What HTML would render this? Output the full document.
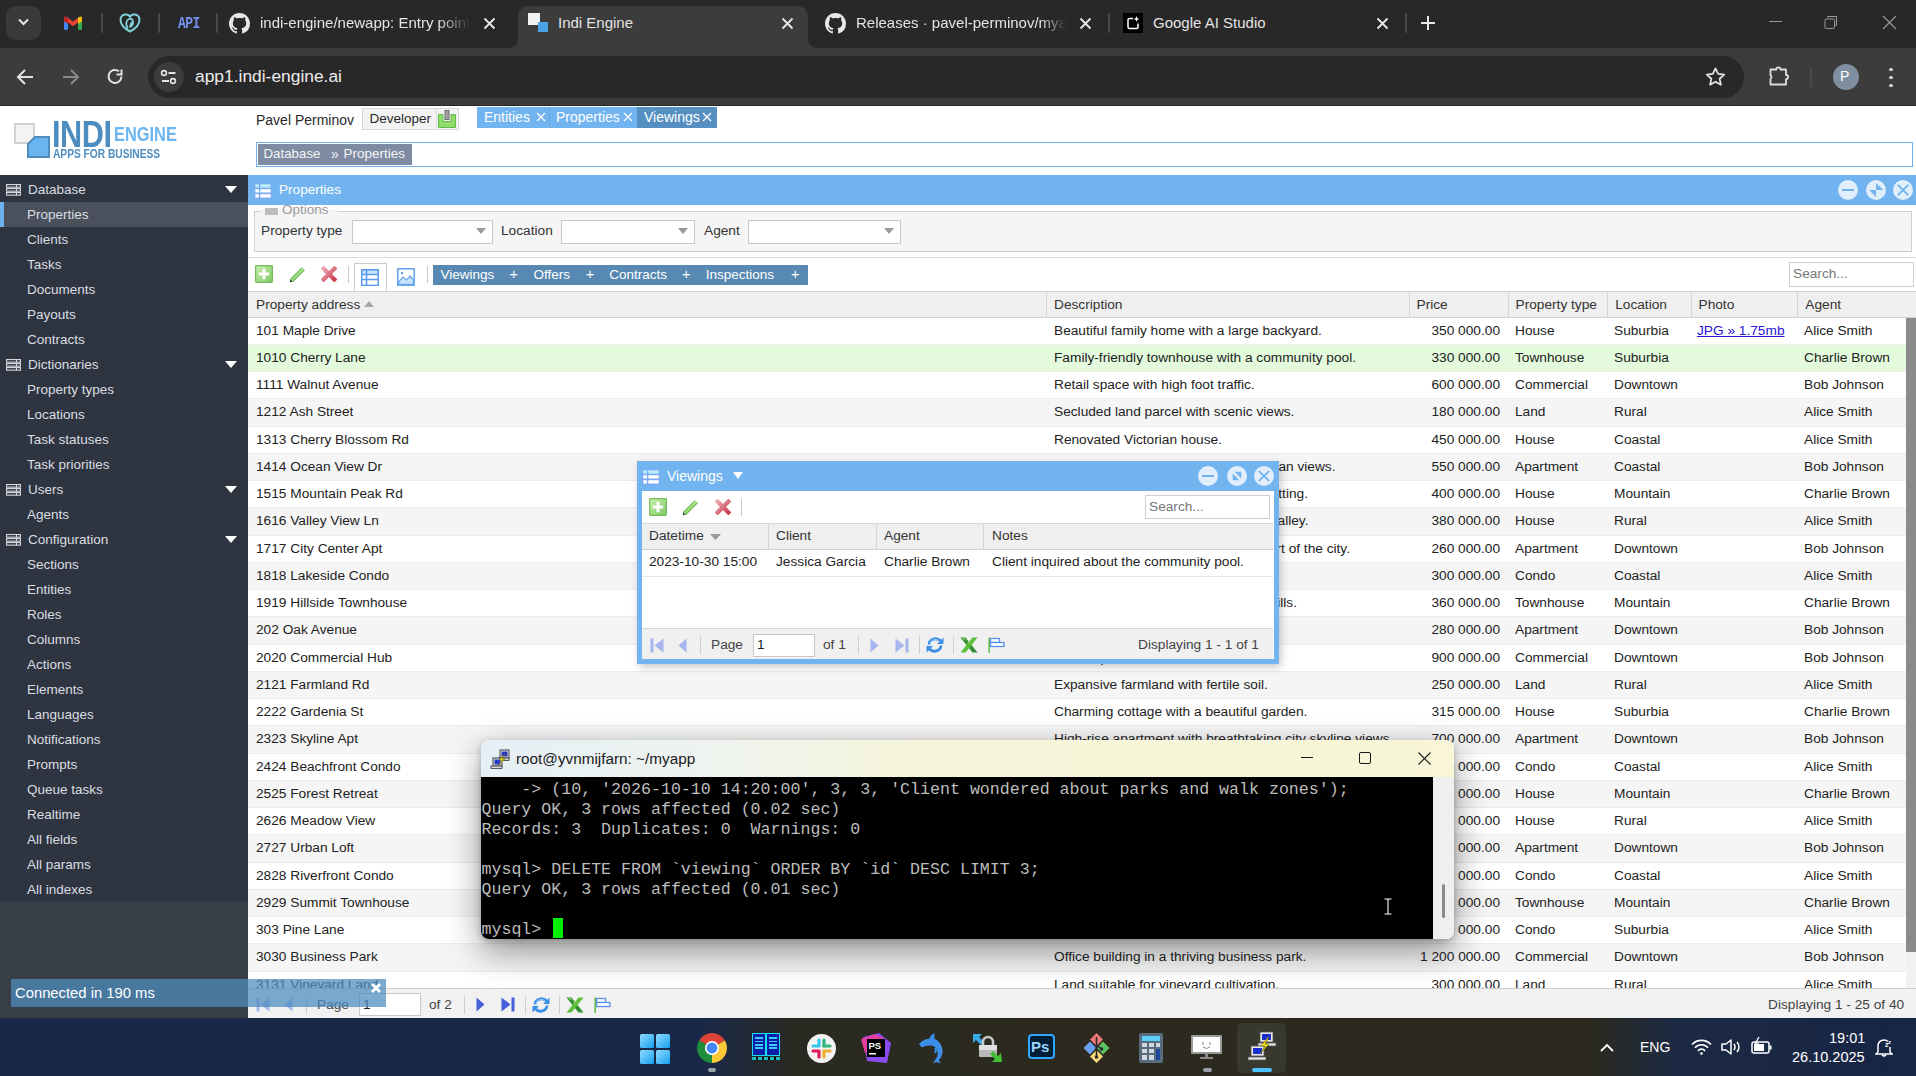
<!DOCTYPE html>
<html><head><meta charset="utf-8">
<style>
*{box-sizing:border-box;margin:0;padding:0}
html,body{width:1916px;height:1076px;overflow:hidden;background:#fff;font-family:"Liberation Sans",sans-serif}
.a{position:absolute}
.t{position:absolute;white-space:nowrap}
/* chrome */
#tabs{left:0;top:0;width:1916px;height:48px;background:#282828}
#tool{left:0;top:48px;width:1916px;height:58px;background:#3c3c3c}
#taskbar{left:0;top:1018px;width:1916px;height:58px;background:linear-gradient(90deg,#192849 0%,#192849 36.5%,#2a2a22 41.5%,#2c2a1e 55%,#2c2a1e 83%,#1c2a44 87.5%,#172546 100%)}
.ctab{color:#e3e3e3;font-size:15px}
.sep{position:absolute;width:2px;background:#4a4a4a;border-radius:1px}
/* app */
#side{left:0;top:175px;width:248px;height:843px;background:#2f3540}
.si{position:absolute;left:0;width:248px;height:25px;color:#d9dde2;font-size:13.5px;line-height:25px}
.si span{position:absolute;left:27px;top:0}
.sh span{left:28px}
.sel{background:#4a515c}
.g{font-size:13.7px;color:#222}
</style></head><body><svg width="0" height="0" style="position:absolute"><defs><linearGradient id="gAdd" x1="0" y1="0" x2="1" y2="1"><stop offset="0" stop-color="#c6f4ae"/><stop offset="1" stop-color="#80c462"/></linearGradient><linearGradient id="gPen" x1="0" y1="1" x2="1" y2="0"><stop offset="0" stop-color="#8fd672"/><stop offset="1" stop-color="#a6e48a"/></linearGradient><linearGradient id="gDel" x1="0" y1="0" x2="1" y2="1"><stop offset="0" stop-color="#e8a8b2"/><stop offset="1" stop-color="#cf3e4f"/></linearGradient></defs></svg>
<!-- ============ BROWSER CHROME ============ -->
<div id="tabs" class="a">
  <div class="a" style="left:6px;top:6px;width:35px;height:34px;border-radius:10px;background:#3a3a3a"></div>
  <svg class="a" style="left:17px;top:17px" width="13" height="10" viewBox="0 0 13 10"><path d="M2 2.5 L6.5 7 L11 2.5" stroke="#e8e8e8" stroke-width="2" fill="none"/></svg>
  <!-- gmail -->
  <svg class="a" style="left:64px;top:16px" width="18" height="14" viewBox="0 0 18 14"><path d="M2 2.5L9 8l7-5.5" fill="none" stroke="#ea4335" stroke-width="3.6" stroke-linejoin="miter"/><rect x="0" y="1" width="4" height="13" rx="1.2" fill="#4285f4"/><rect x="14" y="1" width="4" height="13" rx="1.2" fill="#34a853"/><path d="M14 2.2L16.2 0.6A1.6 1.6 0 0 1 18 2v3.2L14 8z" fill="#fbbc04"/><path d="M4 2.2L1.8 0.6A1.6 1.6 0 0 0 0 2v3.2L4 8z" fill="#c5221f"/></svg>
  <div class="sep" style="left:101px;top:13px;height:20px"></div>
  <svg class="a" style="left:119px;top:13px" width="22" height="20" viewBox="0 0 22 20"><path d="M11 18.5C5 15.5 1.5 11 1.5 6.5 1.5 3 4.5 1 7.5 1.5 9 1.8 10.2 2.6 11 3.6 11.8 2.6 13 1.8 14.5 1.5 17.5 1 20.5 3 20.5 6.5 20.5 11 17 15.5 11 18.5z" fill="none" stroke="#7fd0d8" stroke-width="2"/><path d="M8.5 15C6.5 11.5 7 7 10 6s4.5 1.5 4 4.5c-.3 1.8-1.5 3-2.8 3.5M12.5 9.5l-1.5 4" fill="none" stroke="#7fd0d8" stroke-width="1.8" stroke-linecap="round"/></svg>
  <div class="sep" style="left:158px;top:13px;height:20px"></div>
  <div class="t" style="left:178px;top:15px;color:#7592f2;font-family:'Liberation Mono';font-weight:bold;font-size:13px;letter-spacing:-0.6px;line-height:13px;transform:scaleY(1.25);transform-origin:0 0">API</div>
  <div class="sep" style="left:216px;top:13px;height:20px"></div>
  <!-- github tab -->
  <svg class="a" style="left:229px;top:13px" width="21" height="21" viewBox="0 0 16 16"><path fill="#e8e8e8" d="M8 0C3.58 0 0 3.58 0 8c0 3.54 2.29 6.53 5.47 7.59.4.07.55-.17.55-.38 0-.19-.01-.82-.01-1.49-2.01.37-2.53-.49-2.69-.94-.09-.23-.48-.94-.82-1.13-.28-.15-.68-.52-.01-.53.63-.01 1.08.58 1.23.82.72 1.21 1.87.87 2.33.66.07-.52.28-.87.51-1.07-1.78-.2-3.64-.89-3.64-3.95 0-.87.31-1.59.82-2.15-.08-.2-.36-1.02.08-2.12 0 0 .67-.21 2.2.82.64-.18 1.32-.27 2-.27.68 0 1.36.09 2 .27 1.53-1.04 2.2-.82 2.2-.82.44 1.1.16 1.92.08 2.12.51.56.82 1.27.82 2.15 0 3.07-1.87 3.75-3.65 3.95.29.25.54.73.54 1.48 0 1.07-.01 1.93-.01 2.2 0 .21.15.46.55.38A8.013 8.013 0 0016 8c0-4.42-3.58-8-8-8z"/></svg>
  <div class="t ctab" style="left:260px;top:14px;width:210px;overflow:hidden;-webkit-mask-image:linear-gradient(90deg,#000 85%,transparent)">indi-engine/newapp: Entry point</div>
  <svg class="a" style="left:483px;top:17px" width="13" height="13" viewBox="0 0 13 13"><path d="M1.5 1.5l10 10M11.5 1.5l-10 10" stroke="#e8e8e8" stroke-width="1.8"/></svg>
  <!-- active tab -->
  <div class="a" style="left:518px;top:6px;width:290px;height:42px;background:#3c3c3c;border-radius:10px 10px 0 0"></div>
  <div class="a" style="left:508px;top:38px;width:10px;height:10px;background:radial-gradient(circle at 0 0,#282828 10px,#3c3c3c 10.5px)"></div>
  <div class="a" style="left:808px;top:38px;width:10px;height:10px;background:radial-gradient(circle at 100% 0,#282828 10px,#3c3c3c 10.5px)"></div>
  <div class="a" style="left:528px;top:13px;width:12px;height:12px;background:#f2f2f2"></div>
  <div class="a" style="left:538px;top:22px;width:10px;height:10px;background:#4aa3e6"></div>
  <div class="t ctab" style="left:558px;top:14px">Indi Engine</div>
  <svg class="a" style="left:781px;top:17px" width="13" height="13" viewBox="0 0 13 13"><path d="M1.5 1.5l10 10M11.5 1.5l-10 10" stroke="#e8e8e8" stroke-width="1.8"/></svg>
  <!-- releases tab -->
  <svg class="a" style="left:825px;top:13px" width="21" height="21" viewBox="0 0 16 16"><path fill="#e8e8e8" d="M8 0C3.58 0 0 3.58 0 8c0 3.54 2.29 6.53 5.47 7.59.4.07.55-.17.55-.38 0-.19-.01-.82-.01-1.49-2.01.37-2.53-.49-2.69-.94-.09-.23-.48-.94-.82-1.13-.28-.15-.68-.52-.01-.53.63-.01 1.08.58 1.23.82.72 1.21 1.87.87 2.33.66.07-.52.28-.87.51-1.07-1.78-.2-3.64-.89-3.64-3.95 0-.87.31-1.59.82-2.15-.08-.2-.36-1.02.08-2.12 0 0 .67-.21 2.2.82.64-.18 1.32-.27 2-.27.68 0 1.36.09 2 .27 1.53-1.04 2.2-.82 2.2-.82.44 1.1.16 1.92.08 2.12.51.56.82 1.27.82 2.15 0 3.07-1.87 3.75-3.65 3.95.29.25.54.73.54 1.48 0 1.07-.01 1.93-.01 2.2 0 .21.15.46.55.38A8.013 8.013 0 0016 8c0-4.42-3.58-8-8-8z"/></svg>
  <div class="t ctab" style="left:856px;top:14px;width:210px;overflow:hidden;-webkit-mask-image:linear-gradient(90deg,#000 88%,transparent)">Releases · pavel-perminov/myapp</div>
  <svg class="a" style="left:1079px;top:17px" width="13" height="13" viewBox="0 0 13 13"><path d="M1.5 1.5l10 10M11.5 1.5l-10 10" stroke="#e8e8e8" stroke-width="1.8"/></svg>
  <div class="sep" style="left:1108px;top:13px;height:20px"></div>
  <!-- ai studio -->
  <div class="a" style="left:1123px;top:13px;width:20px;height:20px;background:#000"></div>
  <svg class="a" style="left:1125px;top:15px" width="16" height="16" viewBox="0 0 16 16"><path d="M8 3.5H4.5a1.5 1.5 0 0 0-1.5 1.5v7a1.5 1.5 0 0 0 1.5 1.5h7a1.5 1.5 0 0 0 1.5-1.5V8.5" fill="none" stroke="#fff" stroke-width="1.5"/><path d="M11.5 1l.8 2.2 2.2.8-2.2.8-.8 2.2-.8-2.2-2.2-.8 2.2-.8z" fill="#fff"/></svg>
  <div class="t ctab" style="left:1153px;top:14px">Google AI Studio</div>
  <svg class="a" style="left:1376px;top:17px" width="13" height="13" viewBox="0 0 13 13"><path d="M1.5 1.5l10 10M11.5 1.5l-10 10" stroke="#e8e8e8" stroke-width="1.8"/></svg>
  <div class="sep" style="left:1405px;top:13px;height:20px"></div>
  <svg class="a" style="left:1420px;top:15px" width="16" height="16" viewBox="0 0 16 16"><path d="M8 1v14M1 8h14" stroke="#e8e8e8" stroke-width="2"/></svg>
  <!-- window controls -->
  <div class="a" style="left:1769px;top:21px;width:13px;height:1px;background:#9a9a9a"></div>
  <svg class="a" style="left:1824px;top:15px" width="14" height="14" viewBox="0 0 14 14"><rect x="1" y="4" width="9.5" height="9.5" rx="1.2" fill="none" stroke="#9a9a9a" stroke-width="1"/><path d="M3.5 2.5V1.5h9v9h-1" fill="none" stroke="#9a9a9a" stroke-width="1"/></svg>
  <svg class="a" style="left:1882px;top:15px" width="15" height="15" viewBox="0 0 15 15"><path d="M1 1l13 13M14 1L1 14" stroke="#9a9a9a" stroke-width="1.1"/></svg>
</div>
<div id="tool" class="a"><div class="a" style="left:0;top:57px;width:1916px;height:1px;background:#262626"></div>
  <svg class="a" style="left:16px;top:20px" width="19" height="18" viewBox="0 0 19 18"><path d="M9 2L2 9l7 7M2 9h15" fill="none" stroke="#e3e3e3" stroke-width="2"/></svg>
  <svg class="a" style="left:61px;top:20px" width="19" height="18" viewBox="0 0 19 18"><path d="M10 2l7 7-7 7M17 9H2" fill="none" stroke="#8a8a8a" stroke-width="2"/></svg>
  <svg class="a" style="left:106px;top:20px" width="19" height="18" viewBox="0 0 19 18"><path d="M15.5 8.5A6.5 6.5 0 1 1 13 3.3" fill="none" stroke="#e3e3e3" stroke-width="2"/><path d="M15.5 1.5v5h-5" fill="none" stroke="#e3e3e3" stroke-width="2"/></svg>
  <div class="a" style="left:148px;top:8px;width:1596px;height:42px;border-radius:21px;background:#282828"></div>
  <div class="a" style="left:154px;top:14px;width:30px;height:30px;border-radius:15px;background:#3c3c3c"></div>
  <svg class="a" style="left:160px;top:21px" width="18" height="16" viewBox="0 0 18 16"><circle cx="4" cy="4" r="2.4" fill="none" stroke="#e3e3e3" stroke-width="1.6"/><path d="M8.5 4h7M2 12h7" stroke="#e3e3e3" stroke-width="1.8"/><circle cx="13" cy="12" r="2.4" fill="none" stroke="#e3e3e3" stroke-width="1.6"/></svg>
  <div class="t" style="left:195px;top:18px;color:#ececec;font-size:17.4px">app1.indi-engine.ai</div>
  <svg class="a" style="left:1704px;top:18px" width="23" height="22" viewBox="0 0 24 24"><path d="M12 2.5l2.9 6.2 6.6.7-5 4.5 1.4 6.6L12 17.1l-5.9 3.4 1.4-6.6-5-4.5 6.6-.7z" fill="none" stroke="#e3e3e3" stroke-width="1.9" stroke-linejoin="round"/></svg>
  <svg class="a" style="left:1767px;top:16px" width="24" height="24" viewBox="0 0 24 24"><path d="M3.5 5.5H9.3A2.1 2.1 0 0 1 13.5 5.5H19V11A2.1 2.1 0 0 1 19 15.2V20.5H3.5V15A2.3 2.3 0 0 0 3.5 11.2Z" fill="none" stroke="#dedede" stroke-width="1.8" stroke-linejoin="round"/></svg>
  <div class="sep" style="left:1810px;top:19px;height:20px"></div>
  <div class="a" style="left:1833px;top:16px;width:26px;height:26px;border-radius:13px;background:#7f8f9f"></div>
  <div class="t" style="left:1840px;top:20px;color:#fff;font-size:14px">P</div>
  <div class="a" style="left:1889px;top:19.5px;width:3.5px;height:3.5px;border-radius:2px;background:#d0d0d0"></div>
  <div class="a" style="left:1889px;top:27.5px;width:3.5px;height:3.5px;border-radius:2px;background:#d0d0d0"></div>
  <div class="a" style="left:1889px;top:35.5px;width:3.5px;height:3.5px;border-radius:2px;background:#d0d0d0"></div>
</div>

<!-- APP -->
<!--APP_START-->
<div class="a" style="left:0;top:106px;width:1916px;height:69px;background:#fff">
  <!-- logo -->
  <div class="a" style="left:14px;top:17px;width:21px;height:21px;border:2px solid #d2d2d2;background:#f3f3f3"></div>
  <svg class="a" style="left:27px;top:30px" width="23" height="22" viewBox="0 0 23 22"><path d="M1 21V8L8 1h14v20z" fill="#6ab4f0" stroke="#4c8cbf" stroke-width="2"/></svg>
  <div class="t" style="left:52px;top:11px;color:#4d8cbf;font-weight:bold;font-size:36.5px;letter-spacing:-0.5px;transform:scaleX(0.84);transform-origin:0 0;line-height:36.5px">INDI</div>
  <div class="t" style="left:114px;top:17px;color:#6cb5ef;font-weight:bold;font-size:21px;transform:scaleX(0.78);transform-origin:0 0;line-height:21px">ENGINE</div>
  <div class="t" style="left:53px;top:42px;color:#4d8cbf;font-weight:bold;font-size:12px;transform:scaleX(0.85);transform-origin:0 0;line-height:12px">APPS FOR BUSINESS</div>
  <div class="t" style="left:256px;top:6px;color:#2a2a2a;font-size:14px">Pavel Perminov</div>
  <div class="a" style="left:362px;top:2px;width:97px;height:22px;background:#f3f3f3;border:1px solid #d8d8d8"></div>
  <div class="a" style="left:436px;top:3px;width:1px;height:20px;background:#dcdcdc"></div>
  <div class="t" style="left:369.5px;top:5px;color:#2a2a2a;font-size:13.5px">Developer</div>
  <svg class="a" style="left:438px;top:4px" width="18" height="18" viewBox="0 0 18 18"><path d="M0.5 4.5h4.5v7h8v-7h4.5v13h-17z" fill="#8fdc6a" stroke="#62b848" stroke-width="1"/><rect x="7" y="0.5" width="4" height="9" fill="#a0a0a0" stroke="#707070" stroke-width="1"/></svg>
  <div class="a" style="left:477px;top:1px;width:72px;height:21px;background:#72b4ef"></div>
  <div class="a" style="left:549px;top:1px;width:88px;height:21px;background:#72b4ef;border-left:1px solid #68a6dd"></div>
  <div class="a" style="left:637px;top:1px;width:80px;height:21px;background:#5690c2"></div>
  <div class="t" style="left:484px;top:3px;color:#fff;font-size:14px">Entities</div>
  <svg class="a" style="left:535.5px;top:5.5px" width="10" height="10" viewBox="0 0 10 10"><path d="M1 1l8 8M9 1L1 9" stroke="#fff" stroke-width="1.3"/></svg>
  <div class="t" style="left:556px;top:3px;color:#fff;font-size:14px">Properties</div>
  <svg class="a" style="left:622.5px;top:5.5px" width="10" height="10" viewBox="0 0 10 10"><path d="M1 1l8 8M9 1L1 9" stroke="#fff" stroke-width="1.3"/></svg>
  <div class="t" style="left:644px;top:3px;color:#fff;font-size:14px">Viewings</div>
  <svg class="a" style="left:702px;top:5.5px" width="10" height="10" viewBox="0 0 10 10"><path d="M1 1l8 8M9 1L1 9" stroke="#fff" stroke-width="1.3"/></svg>
  <div class="a" style="left:256px;top:36px;width:1657px;height:25px;border:1px solid #70b0ee;background:#fff"></div>
  <div class="a" style="left:258px;top:38px;width:154px;height:21px;background:#7f8ba3"></div>
  <div class="t" style="left:263.5px;top:40px;color:#f4f4f4;font-size:13.3px">Database</div><div class="t" style="left:331px;top:39.5px;color:#f4f4f4;font-size:14px">»</div><div class="t" style="left:343.5px;top:40px;color:#f4f4f4;font-size:13.5px">Properties</div>
</div>
<div id="side" class="a"><div class="a" style="left:0;top:727px;width:248px;height:116px;background:#373e48"></div>
<div class="si sh" style="top:1.5px"><svg class="a" style="left:6px;top:7.3px" width="15" height="12" viewBox="0 0 15 12"><g fill="none" stroke="#d5d9de" stroke-width="1.1"><rect x="0.55" y="0.55" width="13.9" height="2.6"/><rect x="0.55" y="4.55" width="13.9" height="2.6"/><rect x="0.55" y="8.55" width="13.9" height="2.6"/></g><g stroke="#d5d9de" stroke-width="1"><path d="M10.5 .5v3M10.5 4.5v3M10.5 8.5v3"/></g></svg><span>Database</span><svg class="a" style="left:224.5px;top:9.5px" width="12" height="7" viewBox="0 0 12 7"><path d="M0 0h12L6 7z" fill="#fff"/></svg></div>
<div class="si sel" style="top:26.5px"><div class="a" style="left:0;top:0;width:4px;height:25px;background:#6cb2ee"></div><span>Properties</span></div>
<div class="si" style="top:51.5px"><span>Clients</span></div>
<div class="si" style="top:76.5px"><span>Tasks</span></div>
<div class="si" style="top:101.5px"><span>Documents</span></div>
<div class="si" style="top:126.5px"><span>Payouts</span></div>
<div class="si" style="top:151.5px"><span>Contracts</span></div>
<div class="si sh" style="top:176.5px"><svg class="a" style="left:6px;top:7.3px" width="15" height="12" viewBox="0 0 15 12"><g fill="none" stroke="#d5d9de" stroke-width="1.1"><rect x="0.55" y="0.55" width="13.9" height="2.6"/><rect x="0.55" y="4.55" width="13.9" height="2.6"/><rect x="0.55" y="8.55" width="13.9" height="2.6"/></g><g stroke="#d5d9de" stroke-width="1"><path d="M10.5 .5v3M10.5 4.5v3M10.5 8.5v3"/></g></svg><span>Dictionaries</span><svg class="a" style="left:224.5px;top:9.5px" width="12" height="7" viewBox="0 0 12 7"><path d="M0 0h12L6 7z" fill="#fff"/></svg></div>
<div class="si" style="top:201.5px"><span>Property types</span></div>
<div class="si" style="top:226.5px"><span>Locations</span></div>
<div class="si" style="top:251.5px"><span>Task statuses</span></div>
<div class="si" style="top:276.5px"><span>Task priorities</span></div>
<div class="si sh" style="top:301.5px"><svg class="a" style="left:6px;top:7.3px" width="15" height="12" viewBox="0 0 15 12"><g fill="none" stroke="#d5d9de" stroke-width="1.1"><rect x="0.55" y="0.55" width="13.9" height="2.6"/><rect x="0.55" y="4.55" width="13.9" height="2.6"/><rect x="0.55" y="8.55" width="13.9" height="2.6"/></g><g stroke="#d5d9de" stroke-width="1"><path d="M10.5 .5v3M10.5 4.5v3M10.5 8.5v3"/></g></svg><span>Users</span><svg class="a" style="left:224.5px;top:9.5px" width="12" height="7" viewBox="0 0 12 7"><path d="M0 0h12L6 7z" fill="#fff"/></svg></div>
<div class="si" style="top:326.5px"><span>Agents</span></div>
<div class="si sh" style="top:351.5px"><svg class="a" style="left:6px;top:7.3px" width="15" height="12" viewBox="0 0 15 12"><g fill="none" stroke="#d5d9de" stroke-width="1.1"><rect x="0.55" y="0.55" width="13.9" height="2.6"/><rect x="0.55" y="4.55" width="13.9" height="2.6"/><rect x="0.55" y="8.55" width="13.9" height="2.6"/></g><g stroke="#d5d9de" stroke-width="1"><path d="M10.5 .5v3M10.5 4.5v3M10.5 8.5v3"/></g></svg><span>Configuration</span><svg class="a" style="left:224.5px;top:9.5px" width="12" height="7" viewBox="0 0 12 7"><path d="M0 0h12L6 7z" fill="#fff"/></svg></div>
<div class="si" style="top:376.5px"><span>Sections</span></div>
<div class="si" style="top:401.5px"><span>Entities</span></div>
<div class="si" style="top:426.5px"><span>Roles</span></div>
<div class="si" style="top:451.5px"><span>Columns</span></div>
<div class="si" style="top:476.5px"><span>Actions</span></div>
<div class="si" style="top:501.5px"><span>Elements</span></div>
<div class="si" style="top:526.5px"><span>Languages</span></div>
<div class="si" style="top:551.5px"><span>Notifications</span></div>
<div class="si" style="top:576.5px"><span>Prompts</span></div>
<div class="si" style="top:601.5px"><span>Queue tasks</span></div>
<div class="si" style="top:626.5px"><span>Realtime</span></div>
<div class="si" style="top:651.5px"><span>All fields</span></div>
<div class="si" style="top:676.5px"><span>All params</span></div>
<div class="si" style="top:701.5px"><span>All indexes</span></div>
</div>

<div class="a" style="left:248px;top:175px;width:1668px;height:843px;background:#fff;overflow:hidden">
  <div class="a" style="left:0;top:0;width:1668px;height:30px;background:#72b4ef"></div>
  <svg class="a" style="left:6px;top:7.5px" width="18" height="16" viewBox="0 0 18 16"><rect x="0" y="0" width="18" height="16" rx="1.5" fill="#7aaaf6"/><g fill="#fff"><rect x="1.3" y="6.2" width="3.6" height="3.3"/><rect x="6.3" y="6.2" width="10.4" height="3.3"/><rect x="1.3" y="11.2" width="3.6" height="3.4"/><rect x="6.3" y="11.2" width="10.4" height="3.4"/></g><g fill="#bdeefc"><rect x="1.3" y="1.3" width="3.6" height="3.3"/><rect x="6.3" y="1.3" width="10.4" height="3.3"/></g></svg>
  <div class="t" style="left:31px;top:7px;color:#fff;font-size:13.6px">Properties</div>
  <!-- title tools -->
  <svg class="a" style="left:1590px;top:5px" width="20" height="20" viewBox="0 0 20 20"><circle cx="10" cy="10" r="10" fill="#e1eefb"/><rect x="4" y="9" width="12" height="2" fill="#72b4ef"/></svg>
  <svg class="a" style="left:1618px;top:5px" width="20" height="20" viewBox="0 0 20 20"><circle cx="10" cy="10" r="10" fill="#e1eefb"/><path d="M10 2.8V10H17.2zM3.3 10H10V17z" fill="#72b4ef"/></svg>
  <svg class="a" style="left:1645px;top:5px" width="20" height="20" viewBox="0 0 20 20"><circle cx="10" cy="10" r="10" fill="#e1eefb"/><path d="M4.8 4.8l10.4 10.4M15.2 4.8L4.8 15.2" stroke="#72b4ef" stroke-width="1.8"/></svg>
  <!-- options fieldset -->
  <div class="a" style="left:6px;top:36px;width:1658px;height:41px;border:1px solid #cfcfcf;background:#f5f5f5"></div>
  <div class="a" style="left:13px;top:30px;width:76px;height:10px;background:#fff"></div>
  <div class="a" style="left:13px;top:34px;width:76px;height:6px;background:#f5f5f5"></div>
  <div class="a" style="left:17px;top:33px;width:13px;height:7px;background:#bdbdbd"></div>
  <div class="t" style="left:34px;top:27px;color:#999;font-size:13.5px">Options</div>
  <div class="t g" style="left:13px;top:48px;color:#333">Property type</div>
  <div class="a" style="left:104px;top:45px;width:141px;height:24px;border:1px solid #c8c8c8;background:#fff"></div>
  <svg class="a" style="left:228px;top:53px" width="10" height="6" viewBox="0 0 10 6"><path d="M0 0h10L5 6z" fill="#999"/></svg>
  <div class="t g" style="left:253px;top:48px;color:#333">Location</div>
  <div class="a" style="left:313px;top:45px;width:134px;height:24px;border:1px solid #c8c8c8;background:#fff"></div>
  <svg class="a" style="left:430px;top:53px" width="10" height="6" viewBox="0 0 10 6"><path d="M0 0h10L5 6z" fill="#999"/></svg>
  <div class="t g" style="left:456px;top:48px;color:#333">Agent</div>
  <div class="a" style="left:500px;top:45px;width:153px;height:24px;border:1px solid #c8c8c8;background:#fff"></div>
  <svg class="a" style="left:636px;top:53px" width="10" height="6" viewBox="0 0 10 6"><path d="M0 0h10L5 6z" fill="#999"/></svg>
  <div class="a" style="left:0;top:82px;width:1668px;height:1px;background:#d8d8d8"></div>
  <!-- toolbar -->
  <svg class="a" style="left:7px;top:90px" width="18" height="18" viewBox="0 0 18 18"><rect x="0.6" y="0.6" width="16.8" height="16.8" rx="0.8" fill="url(#gAdd)" stroke="#78bb5e" stroke-width="1.2"/><path d="M9 3.8v10.4M3.8 9h10.4" stroke="#fff" stroke-width="3.1"/></svg>
  <svg class="a" style="left:40.5px;top:91px" width="17" height="17" viewBox="0 0 17 17"><path d="M2.3 14.7L14.3 2.7" stroke="#6cae50" stroke-width="4.4"/><path d="M2.3 14.7L14.3 2.7" stroke="url(#gPen)" stroke-width="2.6"/><path d="M0.8 16.2l2.6-.6-2-2z" fill="#222"/></svg>
  <svg class="a" style="left:73px;top:91px" width="16" height="16" viewBox="0 0 16 16"><path d="M2.6 2.6l10.8 10.8M13.4 2.6L2.6 13.4" stroke="url(#gDel)" stroke-width="4.3" stroke-linecap="square"/></svg>
  <div class="a" style="left:100px;top:91px;width:1px;height:17px;background:#c8c8c8"></div>
  <div class="a" style="left:106px;top:88px;width:33px;height:29px;border:1px solid #cbcbcb;border-bottom:none;background:#fff"></div>
  <svg class="a" style="left:113px;top:94px" width="18" height="17" viewBox="0 0 18 17"><rect x="0.8" y="0.8" width="16.4" height="15.4" fill="#c8e4fb" stroke="#5d9bf0" stroke-width="1.6"/><rect x="1.6" y="5.5" width="14.8" height="10" fill="#fff"/><path d="M1 5.5h16M1 10.5h16M5.5 1v15" stroke="#5d9bf0" stroke-width="1.6"/></svg>
  <svg class="a" style="left:149px;top:93px" width="18" height="18" viewBox="0 0 18 18"><rect x="0.8" y="0.8" width="16.4" height="16.4" fill="#fff" stroke="#6aa5f0" stroke-width="1.6"/><path d="M1.6 14l4.5-5 3.5 3 3.5-4 3.3 4v4.4H1.6z" fill="#c8e4fb" stroke="#6aa5f0" stroke-width="1.2"/><circle cx="5" cy="5" r="1.2" fill="#5d9bf0"/></svg>
  <div class="a" style="left:179px;top:91px;width:1px;height:17px;background:#c8c8c8"></div>
  <div class="a" style="left:185px;top:90px;width:375px;height:20px;background:#5889b3"></div>
  <div class="t" style="left:192.5px;top:92.3px;color:#fff;font-size:13.5px">Viewings</div>
  <div class="t" style="left:261.5px;top:91px;color:#fff;font-size:14.5px">+</div>
  <div class="t" style="left:285.5px;top:92.3px;color:#fff;font-size:13.5px">Offers</div>
  <div class="t" style="left:337.8px;top:91px;color:#fff;font-size:14.5px">+</div>
  <div class="t" style="left:361.3px;top:92.3px;color:#fff;font-size:13.5px">Contracts</div>
  <div class="t" style="left:434px;top:91px;color:#fff;font-size:14.5px">+</div>
  <div class="t" style="left:457.8px;top:92.3px;color:#fff;font-size:13.5px">Inspections</div>
  <div class="t" style="left:543px;top:91px;color:#fff;font-size:14.5px">+</div>
  <div class="a" style="left:1541px;top:87px;width:125px;height:25px;border:1px solid #cfcfcf;background:#fff"></div>
  <div class="t" style="left:1545px;top:91px;color:#777;font-size:13.7px">Search...</div>
  <!-- grid header -->
  <div class="a" style="left:0;top:116px;width:1668px;height:27px;background:#efefef;border-top:1px solid #cfcfcf;border-bottom:1px solid #d0d0d0"></div>

<div class="t g" style="left:8px;top:121.7px;color:#333">Property address</div>
<div class="a" style="left:798px;top:117px;width:1px;height:25px;background:#d6d6d6"></div>
<div class="t g" style="left:806px;top:121.7px;color:#333">Description</div>
<div class="a" style="left:1160.5px;top:117px;width:1px;height:25px;background:#d6d6d6"></div>
<div class="t g" style="left:1168.5px;top:121.7px;color:#333">Price</div>
<div class="a" style="left:1259.5px;top:117px;width:1px;height:25px;background:#d6d6d6"></div>
<div class="t g" style="left:1267.5px;top:121.7px;color:#333">Property type</div>
<div class="a" style="left:1359.2px;top:117px;width:1px;height:25px;background:#d6d6d6"></div>
<div class="t g" style="left:1367.2px;top:121.7px;color:#333">Location</div>
<div class="a" style="left:1442.5px;top:117px;width:1px;height:25px;background:#d6d6d6"></div>
<div class="t g" style="left:1450.5px;top:121.7px;color:#333">Photo</div>
<div class="a" style="left:1549.3px;top:117px;width:1px;height:25px;background:#d6d6d6"></div>
<div class="t g" style="left:1557.3px;top:121.7px;color:#333">Agent</div>
<svg class="a" style="left:116px;top:126px" width="10" height="6" viewBox="0 0 10 6"><path d="M0 6h10L5 0z" fill="#a8a8a8"/></svg>
<div class="a" style="left:0;top:143px;width:1658px;height:700px;overflow:hidden">
<div class="a" style="left:0;top:-0.30px;width:1658px;height:27.25px;background:#fff;border-bottom:1px solid #ececec">
<div class="t g" style="left:8px;top:5px">101 Maple Drive</div>
<div class="t g" style="left:806px;top:5px">Beautiful family home with a large backyard.</div>
<div class="t g" style="left:1160px;width:92px;text-align:right;top:5px">350 000.00</div>
<div class="t g" style="left:1267px;top:5px">House</div>
<div class="t g" style="left:1366px;top:5px">Suburbia</div>
<div class="t g" style="left:1449px;top:5px;color:#2a14d8;text-decoration:underline">JPG » 1.75mb</div>
<div class="t g" style="left:1556px;top:5px">Alice Smith</div>
</div>
<div class="a" style="left:0;top:26.95px;width:1658px;height:27.25px;background:#e3fbdc;border-bottom:1px solid #ececec">
<div class="t g" style="left:8px;top:5px">1010 Cherry Lane</div>
<div class="t g" style="left:806px;top:5px">Family-friendly townhouse with a community pool.</div>
<div class="t g" style="left:1160px;width:92px;text-align:right;top:5px">330 000.00</div>
<div class="t g" style="left:1267px;top:5px">Townhouse</div>
<div class="t g" style="left:1366px;top:5px">Suburbia</div>
<div class="t g" style="left:1556px;top:5px">Charlie Brown</div>
</div>
<div class="a" style="left:0;top:54.20px;width:1658px;height:27.25px;background:#fff;border-bottom:1px solid #ececec">
<div class="t g" style="left:8px;top:5px">1111 Walnut Avenue</div>
<div class="t g" style="left:806px;top:5px">Retail space with high foot traffic.</div>
<div class="t g" style="left:1160px;width:92px;text-align:right;top:5px">600 000.00</div>
<div class="t g" style="left:1267px;top:5px">Commercial</div>
<div class="t g" style="left:1366px;top:5px">Downtown</div>
<div class="t g" style="left:1556px;top:5px">Bob Johnson</div>
</div>
<div class="a" style="left:0;top:81.45px;width:1658px;height:27.25px;background:#f5f5f5;border-bottom:1px solid #ececec">
<div class="t g" style="left:8px;top:5px">1212 Ash Street</div>
<div class="t g" style="left:806px;top:5px">Secluded land parcel with scenic views.</div>
<div class="t g" style="left:1160px;width:92px;text-align:right;top:5px">180 000.00</div>
<div class="t g" style="left:1267px;top:5px">Land</div>
<div class="t g" style="left:1366px;top:5px">Rural</div>
<div class="t g" style="left:1556px;top:5px">Alice Smith</div>
</div>
<div class="a" style="left:0;top:108.70px;width:1658px;height:27.25px;background:#fff;border-bottom:1px solid #ececec">
<div class="t g" style="left:8px;top:5px">1313 Cherry Blossom Rd</div>
<div class="t g" style="left:806px;top:5px">Renovated Victorian house.</div>
<div class="t g" style="left:1160px;width:92px;text-align:right;top:5px">450 000.00</div>
<div class="t g" style="left:1267px;top:5px">House</div>
<div class="t g" style="left:1366px;top:5px">Coastal</div>
<div class="t g" style="left:1556px;top:5px">Alice Smith</div>
</div>
<div class="a" style="left:0;top:135.95px;width:1658px;height:27.25px;background:#f5f5f5;border-bottom:1px solid #ececec">
<div class="t g" style="left:8px;top:5px">1414 Ocean View Dr</div>
<div class="t g" style="right:570.5px;top:5px">Modern apartment with stunning ocean views.</div>
<div class="t g" style="left:1160px;width:92px;text-align:right;top:5px">550 000.00</div>
<div class="t g" style="left:1267px;top:5px">Apartment</div>
<div class="t g" style="left:1366px;top:5px">Coastal</div>
<div class="t g" style="left:1556px;top:5px">Bob Johnson</div>
</div>
<div class="a" style="left:0;top:163.20px;width:1658px;height:27.25px;background:#fff;border-bottom:1px solid #ececec">
<div class="t g" style="left:8px;top:5px">1515 Mountain Peak Rd</div>
<div class="t g" style="right:598px;top:5px">Cozy cabin in a serene mountain setting.</div>
<div class="t g" style="left:1160px;width:92px;text-align:right;top:5px">400 000.00</div>
<div class="t g" style="left:1267px;top:5px">House</div>
<div class="t g" style="left:1366px;top:5px">Mountain</div>
<div class="t g" style="left:1556px;top:5px">Charlie Brown</div>
</div>
<div class="a" style="left:0;top:190.45px;width:1658px;height:27.25px;background:#f5f5f5;border-bottom:1px solid #ececec">
<div class="t g" style="left:8px;top:5px">1616 Valley View Ln</div>
<div class="t g" style="right:597.5px;top:5px">Spacious home overlooking the valley.</div>
<div class="t g" style="left:1160px;width:92px;text-align:right;top:5px">380 000.00</div>
<div class="t g" style="left:1267px;top:5px">House</div>
<div class="t g" style="left:1366px;top:5px">Rural</div>
<div class="t g" style="left:1556px;top:5px">Alice Smith</div>
</div>
<div class="a" style="left:0;top:217.70px;width:1658px;height:27.25px;background:#fff;border-bottom:1px solid #ececec">
<div class="t g" style="left:8px;top:5px">1717 City Center Apt</div>
<div class="t g" style="right:556px;top:5px">Studio apartment in the heart of the city.</div>
<div class="t g" style="left:1160px;width:92px;text-align:right;top:5px">260 000.00</div>
<div class="t g" style="left:1267px;top:5px">Apartment</div>
<div class="t g" style="left:1366px;top:5px">Downtown</div>
<div class="t g" style="left:1556px;top:5px">Bob Johnson</div>
</div>
<div class="a" style="left:0;top:244.95px;width:1658px;height:27.25px;background:#f5f5f5;border-bottom:1px solid #ececec">
<div class="t g" style="left:8px;top:5px">1818 Lakeside Condo</div>
<div class="t g" style="left:806px;top:5px">Condo near the lake.</div>
<div class="t g" style="left:1160px;width:92px;text-align:right;top:5px">300 000.00</div>
<div class="t g" style="left:1267px;top:5px">Condo</div>
<div class="t g" style="left:1366px;top:5px">Coastal</div>
<div class="t g" style="left:1556px;top:5px">Alice Smith</div>
</div>
<div class="a" style="left:0;top:272.20px;width:1658px;height:27.25px;background:#fff;border-bottom:1px solid #ececec">
<div class="t g" style="left:8px;top:5px">1919 Hillside Townhouse</div>
<div class="t g" style="right:609px;top:5px">Townhouse with views of the hills.</div>
<div class="t g" style="left:1160px;width:92px;text-align:right;top:5px">360 000.00</div>
<div class="t g" style="left:1267px;top:5px">Townhouse</div>
<div class="t g" style="left:1366px;top:5px">Mountain</div>
<div class="t g" style="left:1556px;top:5px">Charlie Brown</div>
</div>
<div class="a" style="left:0;top:299.45px;width:1658px;height:27.25px;background:#f5f5f5;border-bottom:1px solid #ececec">
<div class="t g" style="left:8px;top:5px">202 Oak Avenue</div>
<div class="t g" style="left:806px;top:5px">Cozy apartment.</div>
<div class="t g" style="left:1160px;width:92px;text-align:right;top:5px">280 000.00</div>
<div class="t g" style="left:1267px;top:5px">Apartment</div>
<div class="t g" style="left:1366px;top:5px">Downtown</div>
<div class="t g" style="left:1556px;top:5px">Bob Johnson</div>
</div>
<div class="a" style="left:0;top:326.70px;width:1658px;height:27.25px;background:#fff;border-bottom:1px solid #ececec">
<div class="t g" style="left:8px;top:5px">2020 Commercial Hub</div>
<div class="t g" style="left:806px;top:5px">Office space.</div>
<div class="t g" style="left:1160px;width:92px;text-align:right;top:5px">900 000.00</div>
<div class="t g" style="left:1267px;top:5px">Commercial</div>
<div class="t g" style="left:1366px;top:5px">Downtown</div>
<div class="t g" style="left:1556px;top:5px">Bob Johnson</div>
</div>
<div class="a" style="left:0;top:353.95px;width:1658px;height:27.25px;background:#f5f5f5;border-bottom:1px solid #ececec">
<div class="t g" style="left:8px;top:5px">2121 Farmland Rd</div>
<div class="t g" style="left:806px;top:5px">Expansive farmland with fertile soil.</div>
<div class="t g" style="left:1160px;width:92px;text-align:right;top:5px">250 000.00</div>
<div class="t g" style="left:1267px;top:5px">Land</div>
<div class="t g" style="left:1366px;top:5px">Rural</div>
<div class="t g" style="left:1556px;top:5px">Alice Smith</div>
</div>
<div class="a" style="left:0;top:381.20px;width:1658px;height:27.25px;background:#fff;border-bottom:1px solid #ececec">
<div class="t g" style="left:8px;top:5px">2222 Gardenia St</div>
<div class="t g" style="left:806px;top:5px">Charming cottage with a beautiful garden.</div>
<div class="t g" style="left:1160px;width:92px;text-align:right;top:5px">315 000.00</div>
<div class="t g" style="left:1267px;top:5px">House</div>
<div class="t g" style="left:1366px;top:5px">Suburbia</div>
<div class="t g" style="left:1556px;top:5px">Charlie Brown</div>
</div>
<div class="a" style="left:0;top:408.45px;width:1658px;height:27.25px;background:#f5f5f5;border-bottom:1px solid #ececec">
<div class="t g" style="left:8px;top:5px">2323 Skyline Apt</div>
<div class="t g" style="left:806px;top:5px">High-rise apartment with breathtaking city skyline views.</div>
<div class="t g" style="left:1160px;width:92px;text-align:right;top:5px">700 000.00</div>
<div class="t g" style="left:1267px;top:5px">Apartment</div>
<div class="t g" style="left:1366px;top:5px">Downtown</div>
<div class="t g" style="left:1556px;top:5px">Bob Johnson</div>
</div>
<div class="a" style="left:0;top:435.70px;width:1658px;height:27.25px;background:#fff;border-bottom:1px solid #ececec">
<div class="t g" style="left:8px;top:5px">2424 Beachfront Condo</div>
<div class="t g" style="left:806px;top:5px">Beachfront condo.</div>
<div class="t g" style="left:1160px;width:92px;text-align:right;top:5px">500 000.00</div>
<div class="t g" style="left:1267px;top:5px">Condo</div>
<div class="t g" style="left:1366px;top:5px">Coastal</div>
<div class="t g" style="left:1556px;top:5px">Alice Smith</div>
</div>
<div class="a" style="left:0;top:462.95px;width:1658px;height:27.25px;background:#f5f5f5;border-bottom:1px solid #ececec">
<div class="t g" style="left:8px;top:5px">2525 Forest Retreat</div>
<div class="t g" style="left:806px;top:5px">Retreat in the forest.</div>
<div class="t g" style="left:1160px;width:92px;text-align:right;top:5px">420 000.00</div>
<div class="t g" style="left:1267px;top:5px">House</div>
<div class="t g" style="left:1366px;top:5px">Mountain</div>
<div class="t g" style="left:1556px;top:5px">Charlie Brown</div>
</div>
<div class="a" style="left:0;top:490.20px;width:1658px;height:27.25px;background:#fff;border-bottom:1px solid #ececec">
<div class="t g" style="left:8px;top:5px">2626 Meadow View</div>
<div class="t g" style="left:806px;top:5px">House with meadow views.</div>
<div class="t g" style="left:1160px;width:92px;text-align:right;top:5px">340 000.00</div>
<div class="t g" style="left:1267px;top:5px">House</div>
<div class="t g" style="left:1366px;top:5px">Rural</div>
<div class="t g" style="left:1556px;top:5px">Alice Smith</div>
</div>
<div class="a" style="left:0;top:517.45px;width:1658px;height:27.25px;background:#f5f5f5;border-bottom:1px solid #ececec">
<div class="t g" style="left:8px;top:5px">2727 Urban Loft</div>
<div class="t g" style="left:806px;top:5px">Urban loft.</div>
<div class="t g" style="left:1160px;width:92px;text-align:right;top:5px">390 000.00</div>
<div class="t g" style="left:1267px;top:5px">Apartment</div>
<div class="t g" style="left:1366px;top:5px">Downtown</div>
<div class="t g" style="left:1556px;top:5px">Bob Johnson</div>
</div>
<div class="a" style="left:0;top:544.70px;width:1658px;height:27.25px;background:#fff;border-bottom:1px solid #ececec">
<div class="t g" style="left:8px;top:5px">2828 Riverfront Condo</div>
<div class="t g" style="left:806px;top:5px">Riverfront condo.</div>
<div class="t g" style="left:1160px;width:92px;text-align:right;top:5px">410 000.00</div>
<div class="t g" style="left:1267px;top:5px">Condo</div>
<div class="t g" style="left:1366px;top:5px">Coastal</div>
<div class="t g" style="left:1556px;top:5px">Alice Smith</div>
</div>
<div class="a" style="left:0;top:571.95px;width:1658px;height:27.25px;background:#f5f5f5;border-bottom:1px solid #ececec">
<div class="t g" style="left:8px;top:5px">2929 Summit Townhouse</div>
<div class="t g" style="left:806px;top:5px">Townhouse at the summit.</div>
<div class="t g" style="left:1160px;width:92px;text-align:right;top:5px">370 000.00</div>
<div class="t g" style="left:1267px;top:5px">Townhouse</div>
<div class="t g" style="left:1366px;top:5px">Mountain</div>
<div class="t g" style="left:1556px;top:5px">Charlie Brown</div>
</div>
<div class="a" style="left:0;top:599.20px;width:1658px;height:27.25px;background:#fff;border-bottom:1px solid #ececec">
<div class="t g" style="left:8px;top:5px">303 Pine Lane</div>
<div class="t g" style="left:806px;top:5px">Condo on Pine Lane.</div>
<div class="t g" style="left:1160px;width:92px;text-align:right;top:5px">290 000.00</div>
<div class="t g" style="left:1267px;top:5px">Condo</div>
<div class="t g" style="left:1366px;top:5px">Suburbia</div>
<div class="t g" style="left:1556px;top:5px">Alice Smith</div>
</div>
<div class="a" style="left:0;top:626.45px;width:1658px;height:27.25px;background:#f5f5f5;border-bottom:1px solid #ececec">
<div class="t g" style="left:8px;top:5px">3030 Business Park</div>
<div class="t g" style="left:806px;top:5px">Office building in a thriving business park.</div>
<div class="t g" style="left:1160px;width:92px;text-align:right;top:5px">1 200 000.00</div>
<div class="t g" style="left:1267px;top:5px">Commercial</div>
<div class="t g" style="left:1366px;top:5px">Downtown</div>
<div class="t g" style="left:1556px;top:5px">Bob Johnson</div>
</div>
<div class="a" style="left:0;top:653.70px;width:1658px;height:27.25px;background:#fff;border-bottom:1px solid #ececec">
<div class="t g" style="left:8px;top:5px">3131 Vineyard Land</div>
<div class="t g" style="left:806px;top:5px">Land suitable for vineyard cultivation.</div>
<div class="t g" style="left:1160px;width:92px;text-align:right;top:5px">300 000.00</div>
<div class="t g" style="left:1267px;top:5px">Land</div>
<div class="t g" style="left:1366px;top:5px">Rural</div>
<div class="t g" style="left:1556px;top:5px">Alice Smith</div>
</div>
</div>
<div class="a" style="left:1658px;top:143px;width:10px;height:671px;background:#f1f1f1"></div><div class="a" style="left:1658px;top:143px;width:10px;height:634px;background:#8a8a8a"></div>

  <div class="a" style="left:0;top:813px;width:1668px;height:30px;background:#f1f1f1;border-top:1px solid #d0d0d0"></div>
  <svg class="a" style="left:7.5px;top:822.4px" width="14" height="15" viewBox="0 0 14 15"><rect x="0.5" y="0.5" width="3" height="14" fill="#a6b5ee"/><path d="M13.5 0.5v14L4.5 7.5z" fill="#a6b5ee"/></svg>
  <svg class="a" style="left:36px;top:822.4px" width="9" height="15" viewBox="0 0 9 15"><path d="M8.5 0.5v14L0.5 7.5z" fill="#a6b5ee"/></svg>
  <div class="a" style="left:58px;top:820.9px;width:1px;height:18px;background:#cfcfcf"></div>
  <div class="t g" style="left:69px;top:822.3px;color:#444">Page</div>
  <div class="a" style="left:111px;top:818.4px;width:62px;height:23px;border:1px solid #c8c8c8;background:#fff"></div>
  <div class="t g" style="left:115px;top:822.3px;color:#222">1</div>
  <div class="t g" style="left:181px;top:822.3px;color:#444">of 2</div>
  <div class="a" style="left:215.5px;top:820.9px;width:1px;height:18px;background:#cfcfcf"></div>
  <svg class="a" style="left:227.5px;top:822.4px" width="9" height="15" viewBox="0 0 9 15"><path d="M0.5 0.5v14l8-7z" fill="#4560d8"/></svg>
  <svg class="a" style="left:253px;top:822.4px" width="14" height="15" viewBox="0 0 14 15"><path d="M0.5 0.5v14l9-7z" fill="#4560d8"/><rect x="10.5" y="0.5" width="3" height="14" fill="#4560d8"/></svg>
  <div class="a" style="left:276.5px;top:820.9px;width:1px;height:18px;background:#cfcfcf"></div>
  <svg class="a" style="left:284px;top:820.9px" width="18" height="18" viewBox="0 0 18 18"><path d="M3 8.5A6.5 6 0 0 1 14.5 5" fill="none" stroke="#3d8ee6" stroke-width="2.8"/><path d="M17.5 1.5v6.5h-6.5z" fill="#3d8ee6"/><path d="M15 9.5A6.5 6 0 0 1 3.5 13" fill="none" stroke="#3d8ee6" stroke-width="2.8"/><path d="M0.5 16.5V10h6.5z" fill="#3d8ee6"/><path d="M4 8A5.2 4.8 0 0 1 13.5 5.5" fill="none" stroke="#9fd0ff" stroke-width="0.9"/></svg>
  <div class="a" style="left:310.5px;top:820.9px;width:1px;height:18px;background:#cfcfcf"></div>
  <svg class="a" style="left:318px;top:821.9px" width="18" height="16" viewBox="0 0 18 16"><path d="M0.5 0.5h5l12 15h-5z" fill="#2f8f2f"/><path d="M12.5 0.5h5l-12 15h-5z" fill="#5cbf3c"/><path d="M6.5 7l3-3.7 1.2 1.5z" fill="#9be07a"/><path d="M1.5 1h3l2.5 3z" fill="#8fd86a"/></svg>
  <svg class="a" style="left:346px;top:821.9px" width="17" height="16" viewBox="0 0 17 16"><path d="M1.2 0.5v15.5" stroke="#6cbf4a" stroke-width="1.6"/><rect x="2.5" y="1.5" width="9" height="4" fill="#fff" stroke="#5a90ea" stroke-width="1.3"/><rect x="2.5" y="5.5" width="13.5" height="4" fill="#fff" stroke="#5a90ea" stroke-width="1.3"/></svg>
  <div class="t g" style="left:1520px;top:822.3px;color:#444">Displaying 1 - 25 of 40</div>
</div>


<!-- VIEWINGS WINDOW -->
<div class="a" style="left:637px;top:461px;width:642px;height:203px;background:#72b4ef;box-shadow:2px 3px 8px rgba(0,0,0,.22)">
  <svg class="a" style="left:5px;top:7.5px" width="18" height="16" viewBox="0 0 18 16"><rect x="0" y="0" width="18" height="16" rx="1.5" fill="#7aaaf6"/><g fill="#fff"><rect x="1.3" y="6.2" width="3.6" height="3.3"/><rect x="6.3" y="6.2" width="10.4" height="3.3"/><rect x="1.3" y="11.2" width="3.6" height="3.4"/><rect x="6.3" y="11.2" width="10.4" height="3.4"/></g><g fill="#bdeefc"><rect x="1.3" y="1.3" width="3.6" height="3.3"/><rect x="6.3" y="1.3" width="10.4" height="3.3"/></g></svg>
  <div class="t" style="left:30px;top:7px;color:#fff;font-size:14px">Viewings</div>
  <svg class="a" style="left:96px;top:11px" width="10" height="7" viewBox="0 0 10 7"><path d="M0 0h10L5 7z" fill="#fff"/></svg>
  <svg class="a" style="left:561px;top:5px" width="20" height="20" viewBox="0 0 20 20"><circle cx="10" cy="10" r="10" fill="#e1eefb"/><rect x="4" y="9" width="12" height="2" fill="#72b4ef"/></svg>
  <svg class="a" style="left:590px;top:5px" width="20" height="20" viewBox="0 0 20 20"><circle cx="10" cy="10" r="10" fill="#e1eefb"/><path d="M7.6 5.7H14.3V12.4zM5.7 7.6V14.3H12.4z" fill="#72b4ef"/></svg>
  <svg class="a" style="left:617px;top:5px" width="20" height="20" viewBox="0 0 20 20"><circle cx="10" cy="10" r="10" fill="#e1eefb"/><path d="M4.8 4.8l10.4 10.4M15.2 4.8L4.8 15.2" stroke="#72b4ef" stroke-width="1.8"/></svg>
  <div class="a" style="left:5px;top:30px;width:632px;height:168px;background:#fff;overflow:hidden">
    <svg class="a" style="left:7px;top:7px" width="18" height="18" viewBox="0 0 18 18"><rect x="0.6" y="0.6" width="16.8" height="16.8" rx="0.8" fill="url(#gAdd)" stroke="#78bb5e" stroke-width="1.2"/><path d="M9 3.8v10.4M3.8 9h10.4" stroke="#fff" stroke-width="3.1"/></svg>
    <svg class="a" style="left:39.5px;top:7.5px" width="17" height="17" viewBox="0 0 17 17"><path d="M2.3 14.7L14.3 2.7" stroke="#6cae50" stroke-width="4.4"/><path d="M2.3 14.7L14.3 2.7" stroke="url(#gPen)" stroke-width="2.6"/><path d="M0.8 16.2l2.6-.6-2-2z" fill="#222"/></svg>
    <svg class="a" style="left:73px;top:8px" width="16" height="16" viewBox="0 0 16 16"><path d="M2.6 2.6l10.8 10.8M13.4 2.6L2.6 13.4" stroke="url(#gDel)" stroke-width="4.3" stroke-linecap="square"/></svg>
    <div class="a" style="left:99px;top:8px;width:1px;height:17px;background:#c8c8c8"></div>
    <div class="a" style="left:503px;top:4px;width:125px;height:24px;border:1px solid #cfcfcf;background:#fff"></div>
    <div class="t" style="left:507px;top:8px;color:#777;font-size:13.7px">Search...</div>
    <div class="a" style="left:0;top:32px;width:631px;height:27px;background:#efefef;border-top:1px solid #d6d6d6;border-bottom:1px solid #d0d0d0"></div>
    <div class="a" style="left:126px;top:33px;width:1px;height:26px;background:#d6d6d6"></div>
    <div class="a" style="left:234px;top:33px;width:1px;height:26px;background:#d6d6d6"></div>
    <div class="a" style="left:341px;top:33px;width:1px;height:26px;background:#d6d6d6"></div>
    <div class="t g" style="left:7px;top:37px;color:#333">Datetime</div>
    <svg class="a" style="left:68px;top:43px" width="11" height="6" viewBox="0 0 11 6"><path d="M0 0h11L5.5 6z" fill="#999"/></svg>
    <div class="t g" style="left:134px;top:37px;color:#333">Client</div>
    <div class="t g" style="left:242px;top:37px;color:#333">Agent</div>
    <div class="t g" style="left:350px;top:37px;color:#333">Notes</div>
    <div class="a" style="left:0;top:59px;width:631px;height:27px;border-bottom:1px solid #e6e6e6"></div>
    <div class="t g" style="left:7px;top:63px">2023-10-30 15:00</div>
    <div class="t g" style="left:134px;top:63px">Jessica Garcia</div>
    <div class="t g" style="left:242px;top:63px">Charlie Brown</div>
    <div class="t g" style="left:350px;top:63px">Client inquired about the community pool.</div>
    <div class="a" style="left:0;top:137px;width:631px;height:31px;background:#f0f0f0;border-top:1px solid #d6d6d6"></div>
    <svg class="a" style="left:7.5px;top:146.5px" width="14" height="15" viewBox="0 0 14 15"><rect x="0.5" y="0.5" width="3" height="14" fill="#a6b5ee"/><path d="M13.5 0.5v14L4.5 7.5z" fill="#a6b5ee"/></svg>
    <svg class="a" style="left:36px;top:146.5px" width="9" height="15" viewBox="0 0 9 15"><path d="M8.5 0.5v14L0.5 7.5z" fill="#a6b5ee"/></svg>
    <div class="a" style="left:58px;top:145px;width:1px;height:18px;background:#cfcfcf"></div>
    <div class="t g" style="left:69px;top:146.4px;color:#444">Page</div>
    <div class="a" style="left:111px;top:142.5px;width:62px;height:23px;border:1px solid #c8c8c8;background:#fff"></div>
    <div class="t g" style="left:115px;top:146.4px;color:#222">1</div>
    <div class="t g" style="left:181px;top:146.4px;color:#444">of 1</div>
    <div class="a" style="left:215.5px;top:145px;width:1px;height:18px;background:#cfcfcf"></div>
    <svg class="a" style="left:227.5px;top:146.5px" width="9" height="15" viewBox="0 0 9 15"><path d="M0.5 0.5v14l8-7z" fill="#a6b5ee"/></svg>
    <svg class="a" style="left:253px;top:146.5px" width="14" height="15" viewBox="0 0 14 15"><path d="M0.5 0.5v14l9-7z" fill="#a6b5ee"/><rect x="10.5" y="0.5" width="3" height="14" fill="#a6b5ee"/></svg>
    <div class="a" style="left:276.5px;top:145px;width:1px;height:18px;background:#cfcfcf"></div>
    <svg class="a" style="left:284px;top:145.0px" width="18" height="18" viewBox="0 0 18 18"><path d="M3 8.5A6.5 6 0 0 1 14.5 5" fill="none" stroke="#3d8ee6" stroke-width="2.8"/><path d="M17.5 1.5v6.5h-6.5z" fill="#3d8ee6"/><path d="M15 9.5A6.5 6 0 0 1 3.5 13" fill="none" stroke="#3d8ee6" stroke-width="2.8"/><path d="M0.5 16.5V10h6.5z" fill="#3d8ee6"/><path d="M4 8A5.2 4.8 0 0 1 13.5 5.5" fill="none" stroke="#9fd0ff" stroke-width="0.9"/></svg>
    <div class="a" style="left:310.5px;top:145px;width:1px;height:18px;background:#cfcfcf"></div>
    <svg class="a" style="left:318px;top:146.0px" width="18" height="16" viewBox="0 0 18 16"><path d="M0.5 0.5h5l12 15h-5z" fill="#2f8f2f"/><path d="M12.5 0.5h5l-12 15h-5z" fill="#5cbf3c"/><path d="M6.5 7l3-3.7 1.2 1.5z" fill="#9be07a"/><path d="M1.5 1h3l2.5 3z" fill="#8fd86a"/></svg>
    <svg class="a" style="left:346px;top:146.0px" width="17" height="16" viewBox="0 0 17 16"><path d="M1.2 0.5v15.5" stroke="#6cbf4a" stroke-width="1.6"/><rect x="2.5" y="1.5" width="9" height="4" fill="#fff" stroke="#5a90ea" stroke-width="1.3"/><rect x="2.5" y="5.5" width="13.5" height="4" fill="#fff" stroke="#5a90ea" stroke-width="1.3"/></svg>
    <div class="t g" style="left:496px;top:146.4px;color:#444">Displaying 1 - 1 of 1</div>
  </div>
</div>

<!-- TERMINAL -->
<div class="a" style="left:481px;top:740px;width:973px;height:199px;background:linear-gradient(90deg,#e6eff6 0%,#eef3ee 25%,#f6f5da 45%,#f8f6d6 100%);border-radius:8px;box-shadow:0 12px 34px rgba(0,0,0,.42),0 2px 6px rgba(0,0,0,.22);overflow:hidden">
  <svg class="a" style="left:9px;top:9px" width="20" height="20" viewBox="0 0 20 20"><rect x="10" y="1" width="9" height="8" fill="#e0e0e0" stroke="#333" stroke-width=".9"/><rect x="11.5" y="2.5" width="6" height="5" fill="#2638c8"/><rect x="8" y="9" width="11" height="2.5" fill="#d8d8d8" stroke="#333" stroke-width=".8"/><rect x="3" y="9" width="9" height="8" fill="#e0e0e0" stroke="#333" stroke-width=".9"/><rect x="4.5" y="10.5" width="6" height="5" fill="#2638c8"/><rect x="1" y="17" width="11" height="2.5" fill="#d8d8d8" stroke="#333" stroke-width=".8"/><path d="M15 5l-6 6h3l-4 5 7-6h-3z" fill="#f0e020" stroke="#706000" stroke-width=".5"/></svg>
  <div class="t" style="left:35px;top:10px;color:#1a1a1a;font-size:15.3px">root@yvnmijfarn: ~/myapp</div>
  <div class="a" style="left:820px;top:17px;width:12px;height:1.2px;background:#1a1a1a"></div>
  <div class="a" style="left:878px;top:12px;width:12px;height:12px;border:1.2px solid #1a1a1a;border-radius:2px"></div>
  <svg class="a" style="left:937px;top:12px" width="13" height="13" viewBox="0 0 13 13"><path d="M.5 .5l12 12M12.5 .5l-12 12" stroke="#1a1a1a" stroke-width="1.1"/></svg>
  <div class="a" style="left:0;top:37px;width:952px;height:162px;background:#000"></div>
  <div class="a" style="left:952px;top:37px;width:21px;height:162px;background:#efefef"></div>
  <div class="a" style="left:961px;top:144px;width:3px;height:34px;background:#8a8a8a;border-radius:2px"></div>
  <pre class="a" style="left:0.5px;top:39.5px;color:#bdbdbd;font-family:'Liberation Mono',monospace;font-size:16.63px;line-height:20.1px">    -&gt; (10, '2026-10-10 14:20:00', 3, 3, 'Client wondered about parks and walk zones');
Query OK, 3 rows affected (0.02 sec)
Records: 3  Duplicates: 0  Warnings: 0

mysql&gt; DELETE FROM `viewing` ORDER BY `id` DESC LIMIT 3;
Query OK, 3 rows affected (0.01 sec)

mysql&gt; </pre>
  <div class="a" style="left:71.5px;top:178px;width:10px;height:20px;background:#00f000"></div>
  <svg class="a" style="left:903px;top:158px" width="8" height="17" viewBox="0 0 8 17"><path d="M.5 1h7M4 1v15M.5 16h7" stroke="#fff" stroke-width="1.1"/></svg>
</div>
<div class="a" style="left:11px;top:979px;width:375px;height:28px;background:rgba(80,140,190,.74)"></div>
<div class="t" style="left:15px;top:985px;color:#fff;font-size:14.8px">Connected in 190 ms</div>
<svg class="a" style="left:370px;top:982px" width="12" height="12" viewBox="0 0 12 12"><path d="M2 2l8 8M10 2l-8 8" stroke="#fff" stroke-width="2.8"/></svg>
<!--APP_END-->

<div id="taskbar" class="a">

  <!-- windows -->
  <svg class="a" style="left:640px;top:16px" width="30" height="30" viewBox="0 0 30 30"><defs><linearGradient id="wg" x1="0" y1="0" x2="1" y2="1"><stop offset="0" stop-color="#8fdcff"/><stop offset="1" stop-color="#1aa0f0"/></linearGradient></defs><g fill="url(#wg)"><rect x="0" y="0" width="14" height="14" rx="1.5"/><rect x="16" y="0" width="14" height="14" rx="1.5"/><rect x="0" y="16" width="14" height="14" rx="1.5"/><rect x="16" y="16" width="14" height="14" rx="1.5"/></g></svg>
  <!-- chrome -->
  <svg class="a" style="left:697px;top:15px" width="30" height="30" viewBox="0 0 30 30"><path d="M15 15L2.01 7.5A15 15 0 0 1 27.99 7.5z" fill="#db4437"/><path d="M15 15L27.99 7.5A15 15 0 0 1 15 30z" fill="#fcc934"/><path d="M15 15L15 30A15 15 0 0 1 2.01 7.5z" fill="#1e8e3e"/><circle cx="15" cy="15" r="7" fill="#fff"/><circle cx="15" cy="15" r="5.4" fill="#4285f4"/></svg>
  <div class="a" style="left:708px;top:50px;width:8px;height:4px;border-radius:2px;background:#9aa0a8"></div>
  <!-- far -->
  <div class="a" style="left:752px;top:15px;width:28px;height:23px;background:#0a1fa8;border:1.5px solid #18e0f0"></div>
  <div class="a" style="left:765px;top:15px;width:1.5px;height:23px;background:#18e0f0"></div>
  <div class="a" style="left:755px;top:19px;width:8px;height:12px;background:repeating-linear-gradient(#3ac8ff 0 1.5px,transparent 1.5px 3.5px)"></div>
  <div class="a" style="left:769px;top:19px;width:8px;height:12px;background:repeating-linear-gradient(#3ac8ff 0 1.5px,transparent 1.5px 3.5px)"></div>
  <div class="a" style="left:752px;top:39px;width:28px;height:3px;background:repeating-linear-gradient(90deg,#18c0c0 0 4px,#000 4px 6px)"></div>
  <!-- slack -->
  <svg class="a" style="left:807px;top:16px" width="29" height="29" viewBox="0 0 29 29"><circle cx="14.5" cy="14.5" r="14.5" fill="#f2f2f2"/><g stroke-linecap="round" stroke-width="3.2"><path d="M12 6v6" stroke="#36c5f0"/><path d="M6 12h4" stroke="#36c5f0"/><path d="M17 6v6" stroke="#2eb67d"/><path d="M17 12h6" stroke="#2eb67d"/><path d="M17 17v6" stroke="#ecb22e"/><path d="M17 17h6" stroke="#ecb22e"/><path d="M12 17v6" stroke="#e01e5a"/><path d="M6 17h5" stroke="#e01e5a"/></g></svg>
  <!-- phpstorm -->
  <svg class="a" style="left:861px;top:15px" width="30" height="30" viewBox="0 0 30 30"><path d="M2 4L18 0 30 10 26 30 6 28z" fill="#8a4bf0"/><path d="M0 6L14 1 24 6 4 20z" fill="#e33fa0"/><rect x="6" y="6" width="18" height="18" fill="#000"/><text x="7.5" y="16" fill="#fff" font-family="Liberation Sans" font-weight="bold" font-size="9.5">PS</text><rect x="8" y="20" width="7" height="1.5" fill="#fff"/></svg>
  <!-- dolphin -->
  <svg class="a" style="left:918px;top:15px" width="27" height="31" viewBox="0 0 27 31"><path d="M1 11.5C3 8 7 6 11 6c1-3 3-5 6-6-.8 2-.8 4-.3 6C21 8 24 12 24.5 17c.3 4-1 7.5-3.5 10l1.5 3.5-4-1.5-3.5 1.5 2-3.5c2-2 3-5 2.5-8-.5-3.5-3-6-6.5-6.5-3-.4-6 .5-9 2z" fill="#3b8ee6"/><path d="M17 15c1 1.5 1 3.5 0 5" stroke="#3b8ee6" stroke-width="2" fill="none"/></svg>
  <!-- winscp -->
  <svg class="a" style="left:972px;top:15px" width="31" height="30" viewBox="0 0 31 30"><path d="M1 1h9L7 4l5 5-3 3-5-5-3 3z" fill="#38a8e8"/><path d="M11 12V9a5 5 0 0 1 10 0v3" fill="none" stroke="#c8c8c8" stroke-width="2.5"/><rect x="7" y="12" width="18" height="12" rx="1" fill="#b8b8b8"/><rect x="7" y="12" width="18" height="5" fill="#e0e0e0"/><path d="M30 29h-10l3-3-5-5 3-3 5 5 3-3z" fill="#43c032"/></svg>
  <!-- photoshop -->
  <div class="a" style="left:1028px;top:16px;width:27px;height:25px;border-radius:4px;background:#001e36;border:2px solid #31a8ff"></div>
  <div class="t" style="left:1031px;top:20px;color:#9ed5ff;font-size:15px;font-weight:bold">Ps</div>
  <!-- fork -->
  <svg class="a" style="left:1081px;top:15px" width="31" height="30" viewBox="0 0 31 30"><path d="M15.5 0L22 6.5 15.5 13 9 6.5z" fill="#f07878"/><path d="M9 8.5L15 15 9 21.5 2.5 15z" fill="#6aa0f0"/><path d="M22 8.5L28.5 15 22 21.5 16 15z" fill="#5cc060"/><path d="M15.5 17L22 23.5 15.5 30 9 23.5z" fill="#f8d878"/><path d="M15.5 4v20M15.5 12l5 4" stroke="#2a2a2a" stroke-width="1.6" fill="none"/><circle cx="15.5" cy="24" r="1.8" fill="#2a2a2a"/><circle cx="20.5" cy="16" r="1.8" fill="#2a2a2a"/></svg>
  <!-- calc -->
  <svg class="a" style="left:1139px;top:15px" width="24" height="30" viewBox="0 0 24 30"><rect x="0" y="0" width="24" height="30" rx="2" fill="#5a6c7c"/><rect x="3" y="3" width="18" height="5" fill="#5cd0f8"/><g fill="#d0d8e0"><rect x="3" y="10" width="5" height="4"/><rect x="10" y="10" width="5" height="4"/><rect x="17" y="10" width="4" height="4"/><rect x="3" y="16" width="5" height="4"/><rect x="10" y="16" width="5" height="4"/><rect x="3" y="22" width="5" height="5"/><rect x="10" y="22" width="5" height="5"/></g><rect x="17" y="16" width="4" height="11" fill="#1e4a9a"/></svg>
  <!-- monitor -->
  <svg class="a" style="left:1191px;top:17px" width="31" height="25" viewBox="0 0 31 25"><rect x="0" y="0" width="31" height="19" rx="1" fill="#9a9a9a"/><rect x="2" y="2" width="27" height="15" fill="#fff"/><path d="M12 7v3M19 7v3M12 12q3.5 3 7 0" stroke="#888" stroke-width="1" fill="none"/><rect x="14" y="19" width="3" height="3" fill="#888"/><rect x="9" y="22" width="13" height="2" fill="#888"/></svg>
  <div class="a" style="left:1203px;top:50px;width:9px;height:4px;border-radius:2px;background:#9aa0a8"></div>
  <!-- putty active -->
  <div class="a" style="left:1237px;top:5px;width:49px;height:50px;border-radius:5px;background:#38382e"></div>
  <svg class="a" style="left:1247px;top:13px" width="30" height="30" viewBox="0 0 30 30"><rect x="13" y="1" width="13" height="10" fill="#e8e8e8" stroke="#555" stroke-width=".8"/><rect x="15" y="3" width="9" height="6" fill="#1a2ed0"/><path d="M11 12h18v3H11z" fill="#e8e8e8" stroke="#555" stroke-width=".8"/><rect x="4" y="15" width="13" height="10" fill="#e8e8e8" stroke="#555" stroke-width=".8"/><rect x="6" y="17" width="9" height="6" fill="#1a2ed0"/><path d="M1 26h18v3H1z" fill="#e8e8e8" stroke="#555" stroke-width=".8"/><path d="M21 6l-7 9h4l-5 8 9-10h-4l4-7z" fill="#ffe81a" stroke="#6a5a00" stroke-width=".6"/></svg>
  <div class="a" style="left:1252px;top:50px;width:20px;height:4px;border-radius:2px;background:#4cc2ff"></div>
  <!-- tray -->
  <svg class="a" style="left:1600px;top:25px" width="14" height="9" viewBox="0 0 14 9"><path d="M1 8l6-6 6 6" fill="none" stroke="#fff" stroke-width="1.8"/></svg>
  <div class="t" style="left:1640px;top:21px;color:#fff;font-size:14px">ENG</div>
  <svg class="a" style="left:1691px;top:21px" width="21" height="16" viewBox="0 0 21 16"><g fill="none" stroke="#fff" stroke-width="1.6"><path d="M1 5.5a13 13 0 0 1 19 0"/><path d="M4 8.8a8.5 8.5 0 0 1 13 0"/><path d="M7 12a4 4 0 0 1 7 0"/></g><circle cx="10.5" cy="14.5" r="1.3" fill="#fff"/></svg>
  <svg class="a" style="left:1721px;top:21px" width="20" height="16" viewBox="0 0 20 16"><path d="M1 5h4l5-4v14l-5-4H1z" fill="none" stroke="#fff" stroke-width="1.5" stroke-linejoin="round"/><path d="M13 5q2 3 0 6M16 3q4 5 0 10" fill="none" stroke="#fff" stroke-width="1.5"/></svg>
  <svg class="a" style="left:1751px;top:19px" width="22" height="18" viewBox="0 0 22 18"><rect x="1" y="5" width="17" height="11" rx="2" fill="none" stroke="#fff" stroke-width="1.5"/><rect x="18.5" y="8.5" width="2" height="4" fill="#fff"/><rect x="3" y="7" width="10" height="7" fill="#fff"/><path d="M8 0L4 7h3l-2 5" fill="none" stroke="#fff" stroke-width="1.3"/></svg>
  <div class="t" style="left:1829px;top:12px;color:#fff;font-size:14.5px">19:01</div>
  <div class="t" style="left:1792px;top:31px;color:#fff;font-size:14.5px">26.10.2025</div>
  <svg class="a" style="left:1875px;top:20px" width="18" height="19" viewBox="0 0 18 19"><path d="M3 14V8a6 6 0 0 1 10-4.5M15 9v5l2 2H1l2-2" fill="none" stroke="#fff" stroke-width="1.5"/><path d="M7 17q2 2 4 0" stroke="#fff" stroke-width="1.5" fill="none"/><text x="10" y="9" fill="#fff" font-size="7" font-family="Liberation Sans" font-weight="bold">z</text><text x="13" y="6" fill="#fff" font-size="6" font-family="Liberation Sans" font-weight="bold">z</text></svg>

</div>
</body></html>
